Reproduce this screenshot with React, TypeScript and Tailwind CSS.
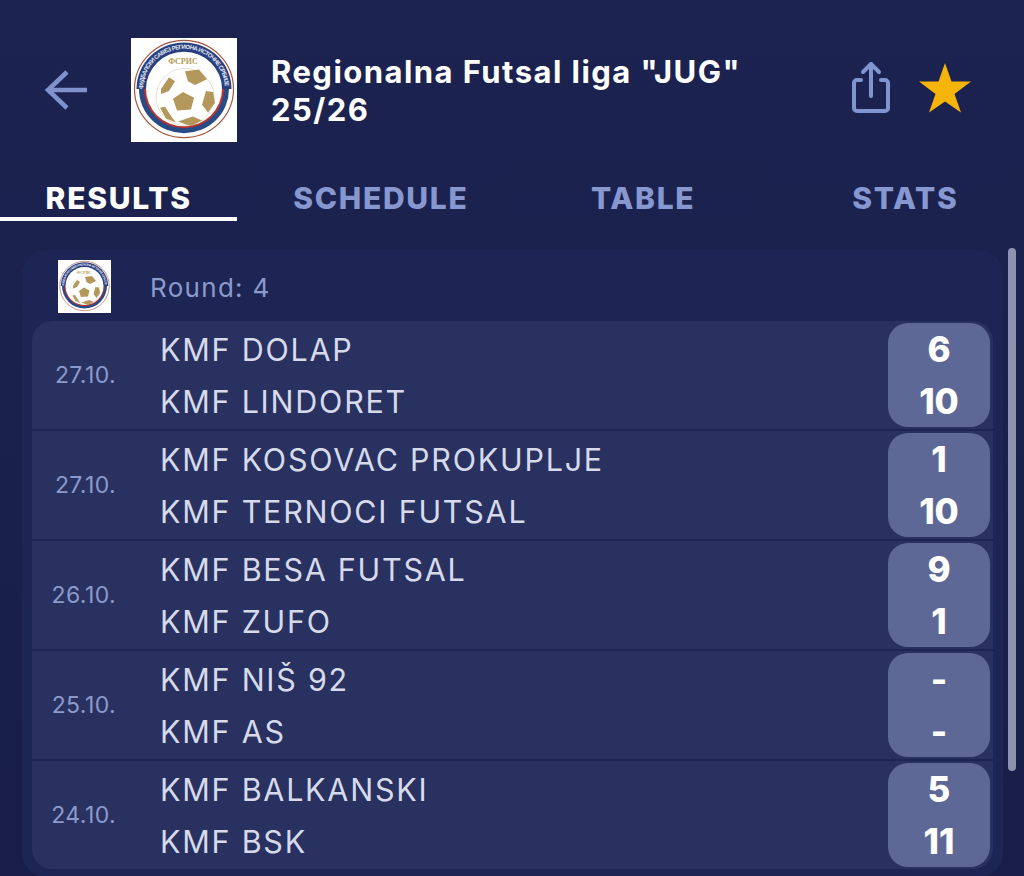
import React from 'react'

const matches = [
    { date: '27.10.', home: 'KMF DOLAP', away: 'KMF LINDORET', homeScore: '6', awayScore: '10' },
    { date: '27.10.', home: 'KMF KOSOVAC PROKUPLJE', away: 'KMF TERNOCI FUTSAL', homeScore: '1', awayScore: '10' },
    { date: '26.10.', home: 'KMF BESA FUTSAL', away: 'KMF ZUFO', homeScore: '9', awayScore: '1' },
    { date: '25.10.', home: 'KMF NIŠ 92', away: 'KMF AS', homeScore: '-', awayScore: '-' },
    { date: '24.10.', home: 'KMF BALKANSKI', away: 'KMF BSK', homeScore: '5', awayScore: '11' },
]

const tabs = ['RESULTS', 'SCHEDULE', 'TABLE', 'STATS']

function LeagueLogo({ id, className }: { id: string; className: string }) {
    return (
        <svg className={className} viewBox="0 0 106 106" preserveAspectRatio="none">
            <rect width="106" height="106" fill="#fff" />
            <circle cx="53" cy="52" r="49.5" fill="none" stroke="#a5553f" strokeWidth="1.2" />
            <path d="M5.5 52 A47.5 47.5 0 0 1 100.5 52 Z" fill="#28407f" />
            <path d="M8 52 A45 45 0 0 0 98 52 L92 52 A39 39 0 0 1 14 52 Z" fill="#2a4a86" />
            <path d="M13 52 A40 40 0 0 0 93 52 L90 52 A37 37 0 0 1 16 52 Z" fill="#b8342f" />
            <circle cx="53" cy="52" r="38" fill="#fff" />
            <path id={id} d="M12 52 A41 41 0 0 1 94 52" fill="none" />
            <text fontFamily="Liberation Sans, sans-serif" fontSize="6" fontWeight="700" fill="#e8ebf5">
                <textPath href={`#${id}`} textLength="126">ФУДБАЛСКИ САВЕЗ РЕГИОНА ИСТОЧНЕ СРБИЈЕ</textPath>
            </text>
            <text x="52" y="27" textAnchor="middle" fontFamily="Liberation Serif, serif" fontSize="8" fontWeight="700" fill="#b59a55">ФСРИС</text>
            <circle cx="54" cy="60" r="29" fill="none" stroke="#ddd8c6" strokeWidth="0.8" />
            <g fill="#b4975a">
                <path d="M52 55 L63 61 L60 73 L46 74 L42 62 Z" />
                <path d="M54 34 L68 32 L76 42 L64 48 L57 44 Z" />
                <path d="M38 40 L30 52 L30 57 L38 54 L44 44 Z" />
                <path d="M75 54 L82 55 L84 66 L77 76 L71 68 Z" />
                <path d="M47 85 L62 80 L71 84 L60 90 Z" />
                <path d="M29 71 L34 70 L41 81 L45 86 L35 82 Z" />
            </g>
        </svg>
    )
}

function BackIcon() {
    return (
        <svg width="46" height="46" viewBox="0 0 46 46" fill="none" stroke="#7f92cc" strokeWidth="4.5">
            <path d="M44 23 H6" />
            <path d="M24 5 L5 23 L24 41" />
        </svg>
    )
}

function ShareIcon() {
    return (
        <svg width="42" height="56" viewBox="0 0 42 56" fill="none" stroke="#8095cf" strokeWidth="4" strokeLinecap="round" strokeLinejoin="round">
            <path d="M11 20 H7 a3 3 0 0 0 -3 3 V48 a3 3 0 0 0 3 3 H35 a3 3 0 0 0 3 -3 V23 a3 3 0 0 0 -3 -3 H31" />
            <path d="M21 36 V4" />
            <path d="M13 12 L21 4 L29 12" />
        </svg>
    )
}

function StarIcon() {
    return (
        <svg width="52" height="50" viewBox="0 0 52 50">
            <path d="M26 0 L32.5 18.5 L52 18.5 L35.5 31 L42 49.5 L26 38.5 L10 49.5 L16.5 31 L0 18.5 L19.5 18.5 Z" fill="#f7b408" />
        </svg>
    )
}

function MatchRow({ match }: { match: (typeof matches)[number] }) {
    return (
        <div className="flex h-[108px] items-center bg-[#293160] pr-[3px]">
            <div className="mr-[45px] w-[84px] text-right text-[23px] tracking-[0.4px] text-[#8c9acb]">{match.date}</div>
            <div className="-ml-[1px] flex flex-1 flex-col gap-[14px] pt-[2px] text-[30.5px] leading-[38px] tracking-[1.75px] text-[#d6daea]">
                <span>{match.home}</span>
                <span>{match.away}</span>
            </div>
            <div className="flex h-[104px] w-[102px] flex-col items-center justify-center gap-[14px] rounded-[20px] bg-[#5e6896] text-[35px] leading-[38px] font-extrabold text-white">
                <span>{match.homeScore}</span>
                <span>{match.awayScore}</span>
            </div>
        </div>
    )
}

export default function App() {
    return (
        <div className="relative h-[876px] w-[1024px] overflow-hidden bg-linear-to-b from-[#1c2350] to-[#181e49] font-['Inter',sans-serif]">
            <div className="flex h-[180px] items-center">
                <div className="flex w-[131px] justify-center">
                    <BackIcon />
                </div>
                <LeagueLogo id="logo-big" className="h-[104px] w-[106px] shrink-0" />
                <div className="ml-[34px] w-[520px] pt-[1px] text-[31px] leading-[38px] font-bold tracking-[1.45px] text-white">
                    Regionalna Futsal liga "JUG" 25/26
                </div>
                <div className="mb-[4px] ml-[59px] flex items-center gap-[27px]">
                    <ShareIcon />
                    <StarIcon />
                </div>
            </div>
            <div className="grid grid-cols-4 gap-[25px]">
                {tabs.map((tab, i) => (
                    <div
                        key={tab}
                        className={`h-[41px] border-b-[4px] text-center text-[30px] leading-[36px] font-extrabold tracking-[1.7px] ${i === 0 ? 'border-white text-white' : 'border-transparent text-[#8798d0]'}`}
                    >
                        {tab}
                    </div>
                ))}
            </div>
            <div className="mt-[29px] ml-[22px] h-[627px] w-[981px] rounded-[24px] bg-[#1d2554] px-[10px]">
                <div className="flex h-[71px] items-center pt-[10px] pb-[8px] pl-[26px]">
                    <LeagueLogo id="logo-small" className="h-[53px] w-[53px]" />
                    <span className="ml-[39px] pt-[1px] text-[26px] tracking-[1.3px] text-[#8c9acb]">Round: 4</span>
                </div>
                <div className="flex flex-col gap-[2px] overflow-hidden rounded-[20px] bg-[#1d2554]">
                    {matches.map((match) => (
                        <MatchRow key={match.date + match.home} match={match} />
                    ))}
                </div>
            </div>
            <div className="absolute top-[248px] left-[1008px] h-[523px] w-[8px] rounded-full bg-[#8d92ae]" />
        </div>
    )
}
